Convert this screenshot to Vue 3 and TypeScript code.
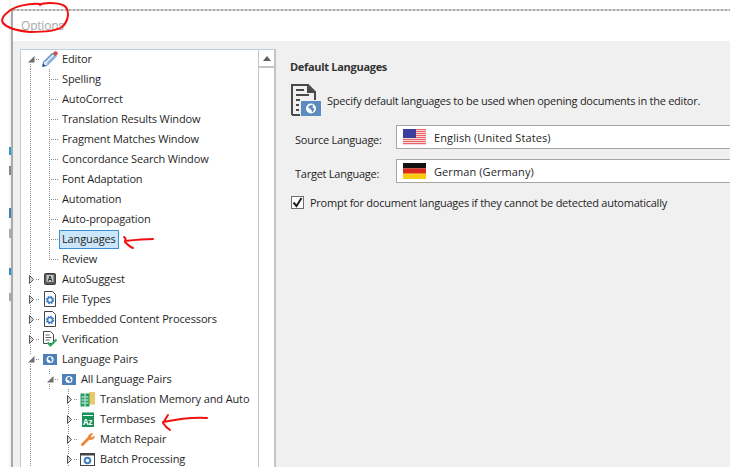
<script setup lang="ts">
type Cell = 'line' | 'blank' | 'tee' | 'corner' | 'open' | 'openFirst' | 'closed'
interface Row {
  label: string
  cells: Cell[]
  icon?: string
  selected?: boolean
}
const editorKids = [
  'Spelling', 'AutoCorrect', 'Translation Results Window', 'Fragment Matches Window',
  'Concordance Search Window', 'Font Adaptation', 'Automation', 'Auto-propagation', 'Languages',
]
const rows: Row[] = [
  { label: 'Editor', cells: ['openFirst'], icon: 'pencil' },
  ...editorKids.map((label): Row => ({ label, cells: ['line', 'tee'], selected: label === 'Languages' })),
  { label: 'Review', cells: ['line', 'corner'] },
  { label: 'AutoSuggest', cells: ['closed'], icon: 'suggest' },
  { label: 'File Types', cells: ['closed'], icon: 'docgear' },
  { label: 'Embedded Content Processors', cells: ['closed'], icon: 'docgear' },
  { label: 'Verification', cells: ['closed'], icon: 'verify' },
  { label: 'Language Pairs', cells: ['open'], icon: 'globe' },
  { label: 'All Language Pairs', cells: ['line', 'open'], icon: 'globe' },
  { label: 'Translation Memory and Auto', cells: ['line', 'blank', 'closed'], icon: 'tm' },
  { label: 'Termbases', cells: ['line', 'blank', 'closed'], icon: 'term' },
  { label: 'Match Repair', cells: ['line', 'blank', 'closed'], icon: 'wrench' },
  { label: 'Batch Processing', cells: ['line', 'blank', 'closed'], icon: 'batch' },
]
const peeks = [
  { top: 147, h: 8, color: '#2a9ad6' },
  { top: 166, h: 9, color: '#7f8890' },
  { top: 208, h: 10, color: '#3a7fbf' },
  { top: 229, h: 9, color: '#b0aaa0' },
  { top: 268, h: 7, color: '#2a8fd0' },
  { top: 293, h: 8, color: '#a0a8b0' },
]
const peekStyles = peeks.map((p, i) => ({
  marginTop: `${p.top - (i === 0 ? 0 : peeks[i - 1].top + peeks[i - 1].h)}px`,
  height: `${p.h}px`,
  background: p.color,
}))
const usStripes = [1, 3, 5, 7, 9, 11, 13, 15]
</script>

<template>
  <div class="page">
    <div class="peek">
      <i v-for="(s, i) in peekStyles" :key="i" :style="s"></i>
    </div>
    <div class="dialog">
      <div class="title">Options</div>
      <div class="body">
        <div class="tree">
          <div class="rows">
            <div v-for="r in rows" :key="r.label" class="row">
              <span v-for="(c, i) in r.cells" :key="i" class="cell" :class="c">
                <svg v-if="c === 'open' || c === 'openFirst'" width="19" height="20" viewBox="0 0 19 20">
                  <path d="M13.5 7v6.500H7z" fill="#6e6e6e" />
                  <path v-if="c === 'open'" d="M9.500 0v5" class="dots" />
                  <path d="M9.500 15v5M15 10.500h4" class="dots" />
                </svg>
                <svg v-else-if="c === 'closed'" width="19" height="20" viewBox="0 0 19 20">
                  <path d="M8.500 6.500v8l4-4z" fill="#d8d8d8" stroke="#555" />
                  <path d="M9.500 0v5M9.500 16v4M15 10.500h4" class="dots" />
                </svg>
              </span>
              <span v-if="r.icon" class="icon">
                <svg v-if="r.icon === 'pencil'" width="18" height="18" viewBox="0 0 18 18">
                  <path d="M1.500 16.500l1-4.500L11.500 3l3.500 3.500L6 15.500z" fill="#dfeaf6" stroke="#3f7cc0" />
                  <path d="M4 11.500l8-8M6 13.500l8-8" stroke="#3f7cc0" />
                  <path d="M1.500 16.500l.7-3 2.300 2.300z" fill="#2c4f78" />
                  <circle cx="14.500" cy="3.500" r="2.200" fill="#c9534f" />
                </svg>
                <svg v-else-if="r.icon === 'suggest'" width="16" height="16" viewBox="0 0 16 16">
                  <rect x="2.500" y="2.500" width="11" height="11" rx="1" fill="#5a5a5a" stroke="#3f3f3f" />
                  <rect x="4.500" y="4" width="7" height="7" fill="#c8c8c8" />
                  <path d="M6 10.500L8 5l2 5.500M6.800 8.500h2.400" fill="none" stroke="#333" />
                </svg>
                <svg v-else-if="r.icon === 'docgear'" width="16" height="18" viewBox="0 0 16 18">
                  <path d="M2.500 1.500h8l3 3v12h-11z" fill="#fff" stroke="#444" />
                  <circle cx="8" cy="10" r="3.200" fill="none" stroke="#3f7fc4" stroke-width="2" stroke-dasharray="1.500 1" />
                  <circle cx="8" cy="10" r="2.500" fill="none" stroke="#3f7fc4" stroke-width="1.500" />
                </svg>
                <svg v-else-if="r.icon === 'verify'" width="18" height="18" viewBox="0 0 18 18">
                  <path d="M2.500 1.500h7l3 3v9h-10z" fill="#fff" stroke="#444" />
                  <path d="M4.500 5h4M4.500 7.500h6M4.500 10h4" stroke="#666" />
                  <path d="M6.500 12.500l3 3 6-6" fill="none" stroke="#2ea866" stroke-width="2.200" />
                </svg>
                <svg v-else-if="r.icon === 'globe'" width="14" height="11" viewBox="0 0 14 11">
                  <rect width="14" height="11" fill="#4d80b8" />
                  <circle cx="7" cy="5.500" r="3.500" fill="#fff" />
                  <path d="M5.500 3.500l3-1-.5 2 1.500 1-1.500 3-1-2-2-1z" fill="#4d80b8" />
                </svg>
                <svg v-else-if="r.icon === 'tm'" width="15" height="15" viewBox="0 0 15 15">
                  <rect x="9" y="0" width="6" height="12.500" fill="#eac86e" />
                  <rect x="0.500" y="1.500" width="9" height="13" fill="#1e9a60" />
                  <path d="M5 1.500v13" stroke="#fff" />
                  <path d="M1.500 5h2.500M1.500 8h2.500M1.500 11h2.500M6 5h2.500M6 8h2.500M6 11h2.500" stroke="#fff" />
                </svg>
                <svg v-else-if="r.icon === 'term'" width="14" height="15" viewBox="0 0 14 15">
                  <rect width="12" height="14.500" x="1" y="0.500" fill="#16925a" />
                  <rect x="2" y="3" width="10" height="1" fill="#fff" />
                  <text x="2" y="12.500" class="az">Az</text>
                </svg>
                <svg v-else-if="r.icon === 'wrench'" width="16" height="16" viewBox="0 0 16 16">
                  <path d="M2.500 13.500L9 7" stroke="#e9893a" stroke-width="3" stroke-linecap="round" />
                  <path d="M8 7.500C7.500 4 10.500 1.500 13.500 2.500L11 5l1 1.500 2.500-2C15.500 7.500 12 10 9 8.500z" fill="#e9893a" />
                </svg>
                <svg v-else-if="r.icon === 'batch'" width="15" height="13" viewBox="0 0 15 13">
                  <rect x="0.500" y="0.500" width="14" height="12" fill="#fff" stroke="#444" />
                  <rect x="0" y="0" width="15" height="2.500" fill="#444" />
                  <circle cx="7.500" cy="7.500" r="2.800" fill="none" stroke="#3f7fc4" stroke-width="2" />
                </svg>
              </span>
              <span class="label" :class="{ selected: r.selected }">{{ r.label }}</span>
            </div>
          </div>
          <div class="scroll">
            <div class="up"><i></i></div>
          </div>
        </div>
        <div class="settings">
          <h2>Default Languages</h2>
          <div class="intro">
            <svg width="30" height="32" viewBox="0 0 30 32">
              <path d="M1 31V1h16l7 7v8" fill="none" stroke="#4a4a4a" stroke-width="2" />
              <path d="M1 31h8" stroke="#4a4a4a" stroke-width="2" />
              <path d="M16 1v8h8z" fill="#4a4a4a" />
              <path d="M5 6h8M5 11h13M5 16h4M5 21h3M5 26h3" stroke="#4a4a4a" stroke-width="2" />
              <rect x="10" y="17" width="20" height="15" fill="#5b8cc0" />
              <circle cx="20" cy="24.500" r="5" fill="#fff" />
              <path d="M17.500 22l4.500-1.500-.5 3 2 1.500-2 3.500-1.500-3-2.500-1.500z" fill="#5b8cc0" />
            </svg>
            <span>Specify default languages to be used when opening documents in the editor.</span>
          </div>
          <div class="field">
            <span class="name">Source Language:</span>
            <div class="combo">
              <svg width="23" height="16" viewBox="0 0 23 16">
                <rect width="23" height="16" fill="#f6d6d6" />
                <rect v-for="y in usStripes" :key="y" x="0" :y="y - 1" width="23" height="1" fill="#e8666a" />
                <rect width="13" height="9" fill="#3d3d9c" />
              </svg>
              <span>English (United States)</span>
            </div>
          </div>
          <div class="field">
            <span class="name">Target Language:</span>
            <div class="combo">
              <svg width="23" height="16" viewBox="0 0 23 16">
                <rect width="23" height="5.400" fill="#111" />
                <rect y="5.400" width="23" height="5.300" fill="#dc2a1e" />
                <rect y="10.700" width="23" height="5.300" fill="#fbcb10" />
              </svg>
              <span>German (Germany)</span>
            </div>
          </div>
          <label class="check">
            <span class="box">
              <svg width="13" height="13" viewBox="0 0 13 13">
                <path d="M2.500 6.500l3 3.500 5-8" fill="none" stroke="#222" stroke-width="2" />
              </svg>
            </span>
            <span>Prompt for document languages if they cannot be detected automatically</span>
          </label>
        </div>
      </div>
    </div>

    <svg class="ink" width="730" height="467" viewBox="0 0 730 467">
      <g fill="none" stroke="#f01010" stroke-width="2" stroke-linecap="round" stroke-linejoin="round">
        <path d="M40 4C30 3 14 6 8 12C3 16 1 20 3 23C8 29 20 31 30 32C42 32 56 31 62 27C68 22 69 14 67 9C65 4 58 3 50 3C46 3 42 3 40 5" />
        <path d="M153 239C145 239 134 240 125 241M124 237C127 239 125 241 125 242C127 244 130 247 133 248" />
        <path d="M207 418C194 417 178 419 163 422M168 415C166 418 165 420 163 423C165 426 167 428 170 430" />
      </g>
    </svg>
  </div>
</template>

<style>
html, body { margin: 0; background: #fff; }
</style>

<style scoped>
.page {
  position: relative;
  width: 730px;
  height: 467px;
  overflow: hidden;
  display: flex;
  background: #fff;
  font-family: "Open Sans", "Noto Sans", sans-serif;
  font-size: 11px;
  color: #1f1f1f;
}
.peek {
  width: 2px;
  margin-left: 9px;
  display: flex;
  flex-direction: column;
  background: #f4f4f4;
}
.peek i { display: block; flex: none; }
.dialog {
  flex: 1;
  min-width: 0;
  margin-top: 9px;
  display: flex;
  flex-direction: column;
  border-left: 2px solid #a9a9a9;
  background-image: repeating-linear-gradient(to right, #a9a9a9 0 2px, #d4d4d4 2px 4px);
  background-size: 100% 2px;
  background-repeat: no-repeat;
}
.title {
  box-sizing: border-box;
  height: 30px;
  margin-top: 2px;
  padding: 0 0 2px 8px;
  display: flex;
  align-items: center;
  font-size: 12px;
  letter-spacing: -0.2px;
  color: #a8a8a8;
  background: #fff;
}
.body {
  flex: 1;
  min-height: 0;
  display: flex;
  padding: 8px 0 0 7px;
  background: #f0f0f0;
}
.tree {
  width: 256px;
  flex: none;
  display: flex;
  box-sizing: border-box;
  border-left: 1px solid #bcd0de;
  border-top: 1px solid #bcd0de;
  background: #fff;
}
.rows {
  flex: 1;
  min-width: 0;
  overflow: hidden;
  margin-top: -1px;
  letter-spacing: -0.13px;
}
.row {
  height: 20px;
  display: flex;
  align-items: center;
  white-space: nowrap;
}
.cell {
  width: 19px;
  height: 20px;
  flex: none;
  display: block;
  background-repeat: no-repeat;
}
.cell svg { display: block; }
.line, .tee, .corner {
  background-image: repeating-linear-gradient(to bottom, #8c8c8c 0 1px, transparent 1px 2px);
  background-size: 1px 100%;
  background-position: 9px 0;
}
.tee, .corner {
  background-image:
    repeating-linear-gradient(to bottom, #8c8c8c 0 1px, transparent 1px 2px),
    repeating-linear-gradient(to right, #8c8c8c 0 1px, transparent 1px 2px);
  background-size: 1px 100%, 10px 1px;
  background-position: 9px 0, 9px 10px;
}
.corner { background-size: 1px 11px, 10px 1px; }
.dots {
  fill: none;
  stroke: #8c8c8c;
  stroke-dasharray: 1 1;
}
.icon {
  width: 19px;
  height: 20px;
  flex: none;
  display: flex;
  align-items: center;
  justify-content: center;
}
.az {
  font-family: "Open Sans", sans-serif;
  font-size: 8px;
  font-weight: 700;
  letter-spacing: 0;
  fill: #fff;
}
.label {
  box-sizing: border-box;
  height: 20px;
  padding: 0 3px;
  line-height: 20px;
}
.label.selected {
  height: 19px;
  margin-top: 1px;
  line-height: 18px;
  background: #cbe6f8;
  outline: 1px solid #3d8fd1;
  outline-offset: -1px;
}
.scroll {
  width: 18px;
  flex: none;
  box-sizing: border-box;
  border-left: 1px solid #c4c4c4;
  border-right: 2px solid #c4c4c4;
  background: #fff;
}
.up {
  height: 16px;
  display: flex;
  align-items: center;
  justify-content: center;
  border-bottom: 2px solid #c4c4c4;
}
.up i {
  width: 0;
  height: 0;
  border-left: 4px solid transparent;
  border-right: 4px solid transparent;
  border-bottom: 5px solid #606060;
}
.settings {
  flex: 1;
  min-width: 0;
  padding-left: 14px;
  display: flex;
  flex-direction: column;
  letter-spacing: -0.25px;
}
h2 {
  margin: 10px 0 0;
  font-size: 11px;
  line-height: 15px;
  font-weight: 700;
  letter-spacing: -0.3px;
  color: #333;
}
.intro {
  margin: 10px 0 0 1px;
  height: 32px;
  display: flex;
  align-items: center;
  gap: 6px;
  white-space: nowrap;
}
.field {
  display: flex;
  align-items: center;
  margin-top: 9px;
  padding-left: 5px;
  height: 24px;
}
.field + .field { margin-top: 10px; }
.name { width: 101px; flex: none; padding-top: 4px; }
.combo {
  flex: 1;
  height: 24px;
  box-sizing: border-box;
  border: 1px solid #a6a6a6;
  border-right: 0;
  background: #fff;
  display: flex;
  align-items: center;
  gap: 8px;
  padding-left: 6px;
  letter-spacing: 0.1px;
  margin-right: -20px;
}
.check {
  margin: 12px 0 0 1px;
  display: flex;
  align-items: center;
  gap: 6px;
  white-space: nowrap;
}
.box {
  width: 13px;
  height: 13px;
  flex: none;
  box-sizing: border-box;
  border: 1px solid #6e6e6e;
  background: #fff;
  display: block;
}
.box svg { display: block; margin: -1px; }
.ink {
  position: absolute;
  left: 0;
  top: 0;
  pointer-events: none;
}
</style>
